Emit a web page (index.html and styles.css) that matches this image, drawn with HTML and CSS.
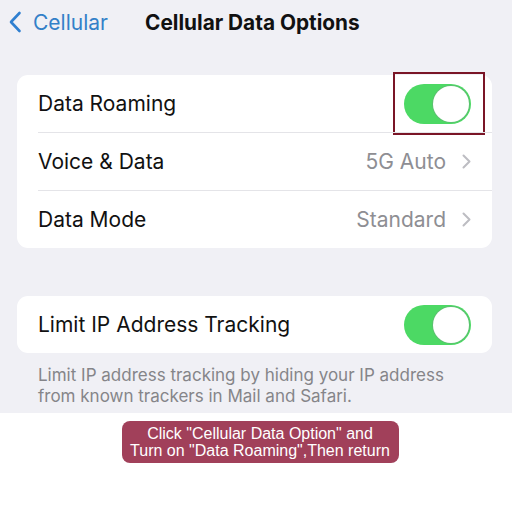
FILE: index.html
```html
<!DOCTYPE html>
<html>
<head>
<meta charset="utf-8">
<link rel="stylesheet" href="styles.css">
</head>
<body>
<div class="screen">
  <div class="nav">
    <div class="back">
      <svg class="chev-back" width="14" height="22" viewBox="0 0 14 22"><path d="M11.5 2 L3 11 L11.5 20" fill="none" stroke="#2f7fd0" stroke-width="2.6" stroke-linecap="round" stroke-linejoin="round"/></svg>
      <span class="back-label">Cellular</span>
    </div>
    <div class="title">Cellular Data Options</div>
  </div>

  <div class="card card1">
    <div class="row">
      <span class="label">Data Roaming</span>
      <span class="toggle-wrap highlight"><span class="toggle"><span class="knob"></span></span></span>
    </div>
    <div class="row">
      <span class="label">Voice &amp; Data</span>
      <span class="value">5G Auto<svg class="chev" width="9" height="15" viewBox="0 0 9 15"><path d="M1.5 1.5 L7.5 7.5 L1.5 13.5" fill="none" stroke="#bdbdc2" stroke-width="2" stroke-linecap="round" stroke-linejoin="round"/></svg></span>
    </div>
    <div class="row">
      <span class="label">Data Mode</span>
      <span class="value">Standard<svg class="chev" width="9" height="15" viewBox="0 0 9 15"><path d="M1.5 1.5 L7.5 7.5 L1.5 13.5" fill="none" stroke="#bdbdc2" stroke-width="2" stroke-linecap="round" stroke-linejoin="round"/></svg></span>
    </div>
  </div>

  <div class="card card2">
    <div class="row">
      <span class="label">Limit IP Address Tracking</span>
      <span class="toggle-wrap"><span class="toggle"><span class="knob"></span></span></span>
    </div>
  </div>
  <p class="footnote">Limit IP address tracking by hiding your IP address from known trackers in Mail and Safari.</p>
</div>
<div class="banner-area">
  <div class="banner">Click "Cellular Data Option" and<br>Turn on "Data Roaming",Then return</div>
</div>
</body>
</html>
```
FILE: styles.css
```css
html, body {
  margin: 0;
  padding: 0;
  background: #ffffff;
}
body {
  width: 520px;
  height: 520px;
  overflow: hidden;
  font-family: Inter, "Liberation Sans", sans-serif;
}
.screen {
  width: 512px;
  height: 413px;
  background: #f0f0f5;
  display: flex;
  flex-direction: column;
  box-sizing: border-box;
}
.nav {
  height: 44px;
  display: flex;
  align-items: center;
  padding-left: 8px;
}
.back {
  display: flex;
  align-items: center;
  gap: 11px;
  width: 137px;
}
.back-label {
  color: #3380c8;
  font-size: 21px;
}
.title {
  font-size: 20.8px;
  font-weight: 700;
  color: #111;
}
.card {
  margin: 0 20px 0 17px;
  background: #ffffff;
  border-radius: 11px;
}
.card1 {
  margin-top: 31px;
}
.card2 {
  margin-top: 48px;
}
.row {
  height: 57px;
  display: flex;
  align-items: center;
  justify-content: space-between;
  padding-left: 21px;
  padding-right: 21px;
  position: relative;
}
.card1 .row + .row {
  border-top: 1px solid #e4e4e8;
  margin-left: 21px;
  padding-left: 0;
}
.label {
  font-size: 21px;
  color: #111;
}
.value {
  font-size: 21px;
  color: #8e8e93;
  display: flex;
  align-items: center;
  gap: 16px;
}
.chev {
  display: block;
}
.toggle-wrap {
  display: block;
  position: relative;
}
.highlight::after {
  content: "";
  position: absolute;
  left: -11px;
  top: -12px;
  width: 88px;
  height: 59px;
  border: 2px solid #7a1526;
}
.toggle {
  display: block;
  width: 67px;
  height: 40px;
  border-radius: 20px;
  background: #4cd964;
  position: relative;
}
.knob {
  position: absolute;
  right: 2px;
  top: 2px;
  width: 36px;
  height: 36px;
  border-radius: 50%;
  background: #fff;
  box-shadow: 0 0 0 1px #5cc070;
}
.footnote {
  margin: 12px 50px 0 38px;
  font-size: 17px;
  line-height: 21px;
  color: #858589;
}
.banner-area {
  display: flex;
  justify-content: center;
  padding-top: 8px;
}
.banner {
  background: #a1405a;
  color: #fff;
  font-family: "Liberation Sans", Arial, sans-serif;
  font-size: 16px;
  line-height: 17px;
  text-align: center;
  border-radius: 8px;
  width: 277px;
  height: 42px;
  box-sizing: border-box;
  padding-top: 4px;
}
```
